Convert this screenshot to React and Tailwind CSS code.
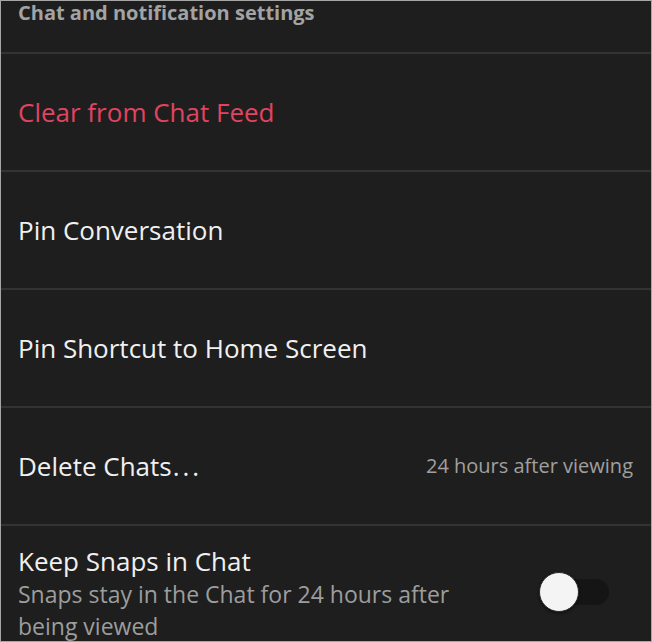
const rows = [
  { label: 'Clear from Chat Feed', danger: true },
  { label: 'Pin Conversation' },
  { label: 'Pin Shortcut to Home Screen' },
  { label: 'Delete Chats', dots: true, value: '24 hours after viewing' },
]

function Toggle() {
  return (
    <div className="relative w-[70px] h-[26px] rounded-full bg-[#151515]">
      <div className="absolute left-0 top-[-7px] w-[40px] h-[40px] rounded-full bg-[#f4f4f4] border border-[#2a2a2a] shadow-[0_1px_3px_rgba(0,0,0,0.6)]" />
    </div>
  )
}

export default function App() {
  return (
    <div className="w-[652px] h-[642px] overflow-hidden border border-[#a6a6a6] bg-[#1e1e1e] font-['Open_Sans',sans-serif]">
      <div className="h-[51px] px-[17px]">
        <h2 className="text-[20px] leading-[24px] font-bold text-[#a3a3a3]">Chat and notification settings</h2>
      </div>
      {rows.map((row) => (
        <div key={row.label} className="h-[118px] border-t-2 border-[#333333] flex items-center justify-between pl-[17px] pr-[18px]">
          <span className={`text-[26px] ${row.danger ? 'text-[#e04461]' : 'text-[#f0f0f0]'}`}>
            {row.label}
            {row.dots && <><span className="ml-[1px] tracking-[3px]">..</span>.</>}
          </span>
          {row.value && <span className="text-[20px] text-[#a0a0a0]">{row.value}</span>}
        </div>
      ))}
      <div className="border-t-2 border-[#333333] flex items-start justify-between pl-[17px] pr-[42px] pt-[18px]">
        <div className="w-[460px]">
          <div className="text-[26px] leading-[34px] text-[#f0f0f0]">Keep Snaps in Chat</div>
          <div className="text-[23px] leading-[32px] text-[#9d9d9d]">Snaps stay in the Chat for 24 hours after being viewed</div>
        </div>
        <div className="mt-[35px]">
          <Toggle />
        </div>
      </div>
    </div>
  )
}
